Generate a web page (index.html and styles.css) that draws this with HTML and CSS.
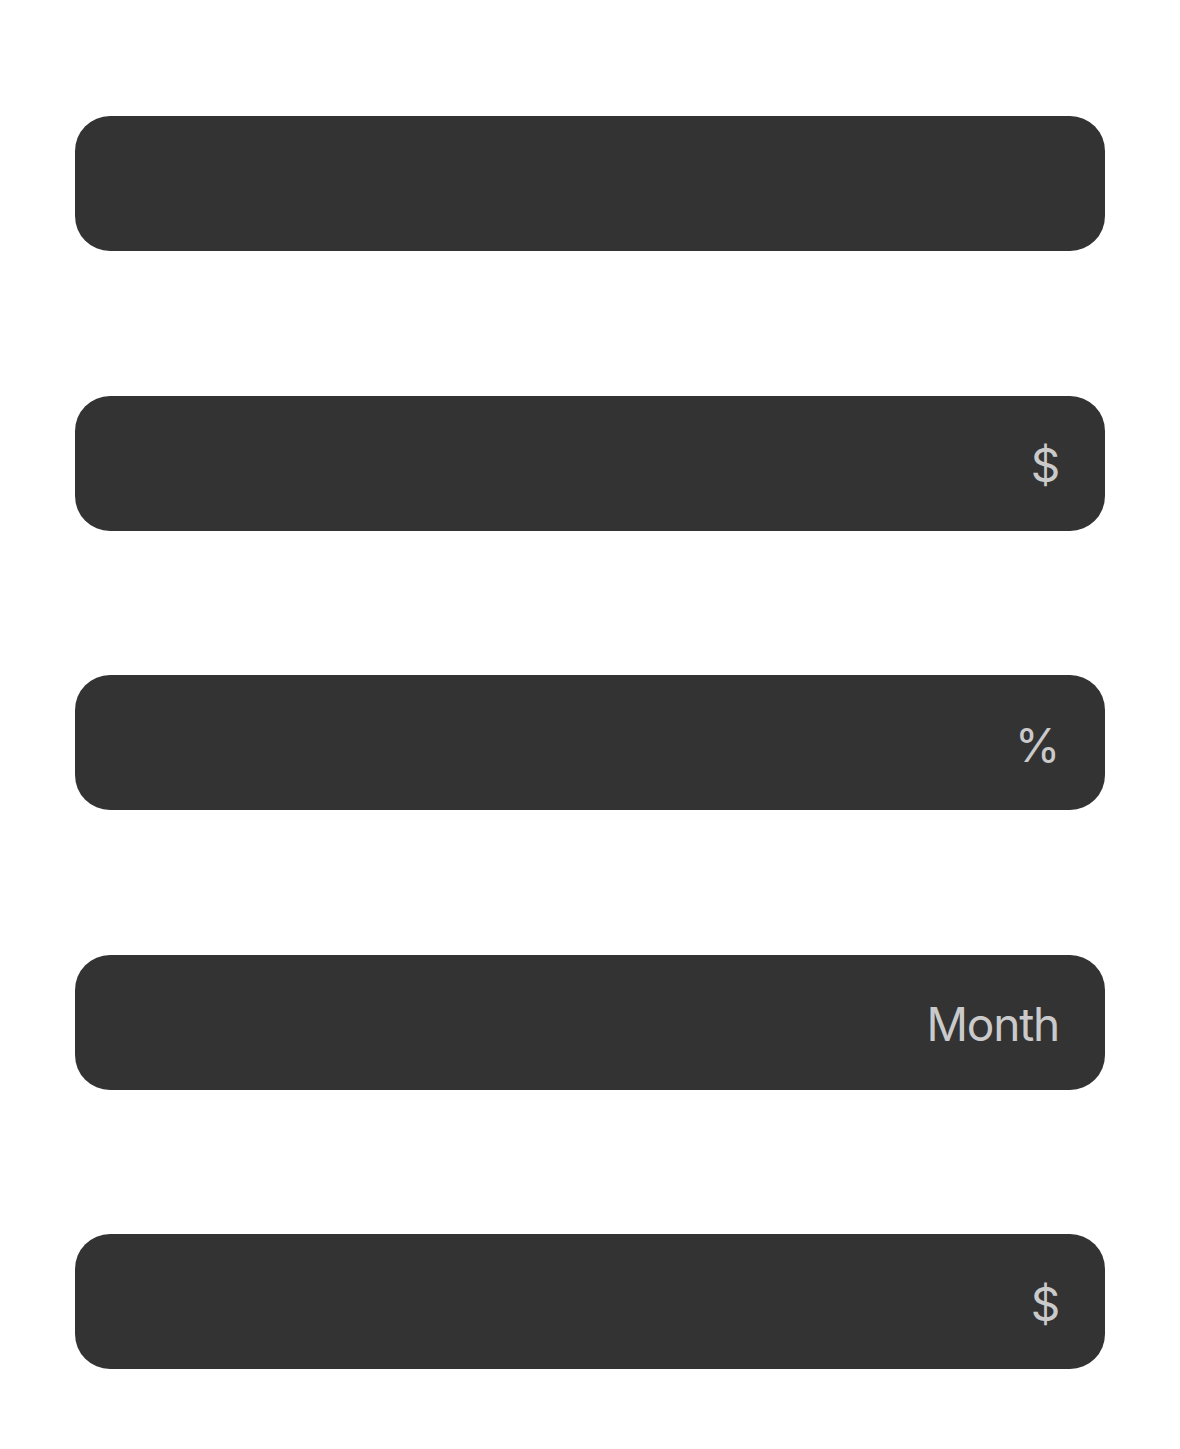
FILE: index.html
```html
<!DOCTYPE html>
<html>
<head>
<meta charset="utf-8">
<link rel="stylesheet" href="styles.css">
</head>
<body>
<div class="form">
  <div class="field"></div>
  <div class="field"><span class="unit">$</span></div>
  <div class="field"><span class="unit">%</span></div>
  <div class="field"><span class="unit">Month</span></div>
  <div class="field"><span class="unit">$</span></div>
</div>
</body>
</html>
```
FILE: styles.css
```css
html, body {
  margin: 0;
  padding: 0;
  background: #ffffff;
}
.form {
  display: flex;
  flex-direction: column;
  gap: 144.5px;
  padding: 116px 75px 0 75px;
}
.field {
  height: 135px;
  background: #333333;
  border-radius: 35px;
  display: flex;
  align-items: center;
  justify-content: flex-end;
  padding: 0 46px;
}
.unit {
  font-family: Inter, "Noto Sans", sans-serif;
  font-size: 46px;
  letter-spacing: -1.2px;
  color: #cacaca;
  line-height: 1;
  position: relative;
  top: 2px;
}
```
